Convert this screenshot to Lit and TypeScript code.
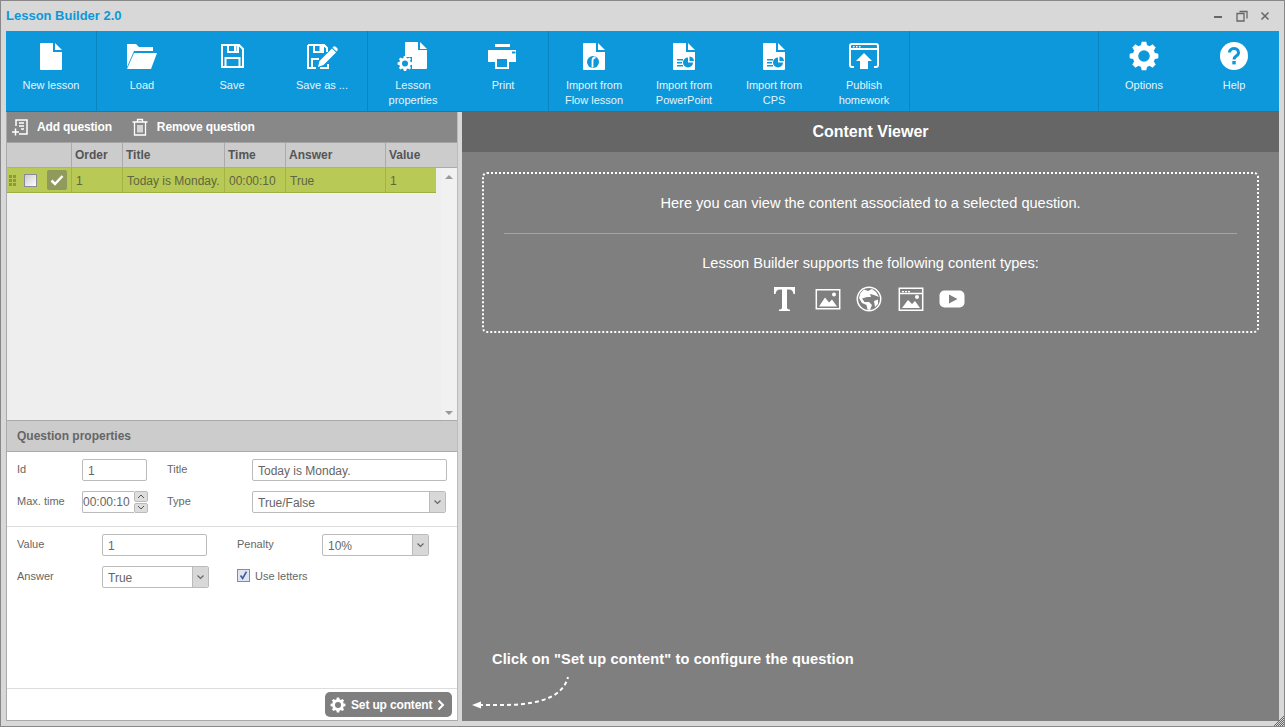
import { LitElement, html, css, svg } from 'lit'
import { customElement } from 'lit/decorators.js'

// gear outline with a round hole, teeth computed around the centre
const gearPath = (cx: number, cy: number, r: number, teeth = 8) => {
  const pts: string[] = []
  const step = (Math.PI * 2) / teeth
  const inner = r * 0.78
  for (let i = 0; i < teeth; i++) {
    const a = i * step - Math.PI / 2
    const list: [number, number][] = [
      [inner, a - step * 0.34],
      [r, a - step * 0.2],
      [r, a + step * 0.2],
      [inner, a + step * 0.34]
    ]
    for (const [rr, aa] of list) {
      pts.push(`${(cx + rr * Math.cos(aa)).toFixed(2)} ${(cy + rr * Math.sin(aa)).toFixed(2)}`)
    }
  }
  const h = r * 0.4
  return `M${pts.join('L')}Z M${cx - h} ${cy}a${h} ${h} 0 1 0 ${h * 2} 0a${h} ${h} 0 1 0 ${-h * 2} 0Z`
}

const sheet = svg`<path d="M5 4a1 1 0 0 1 1-1H18V12H27V29a1 1 0 0 1-1 1H6a1 1 0 0 1-1-1Z"/><path d="M20 3L27 10H20Z"/>`
const pie = svg`
  <path d="M9 19h6v1.500H9ZM9 22h5v1.500H9ZM9 25h6v1.500H9Z" fill="#0c98da"/>
  <path d="M20 17.500V22.500H25A5 5 0 1 1 20 17.500Z" fill="#0c98da"/>
  <path d="M21.500 16.500a5 5 0 0 1 4.500 4.500H21.500Z" fill="#0c98da"/>`

const icons: Record<string, unknown> = {
  file: sheet,
  folder: svg`<path d="M1 4H10L13 7H27V11H8L1 27Z"/><path d="M8 13H31L25 29H1Z"/>`,
  save: svg`<path d="M6 5H23L27 9V27H6Z M12 5V12H22V5 M9.500 27V18H23.500V27" fill="none" stroke="#fff" stroke-width="2"/><path d="M18 6h2.500v5H18Z"/>`,
  saveas: svg`<path d="M2 5H18L21 8V12 M10 28H2V5 M8 5V12H17V5 M6 28V19H13 M22 24V28H14" fill="none" stroke="#fff" stroke-width="2"/><path d="M13.500 6h2.500v5H13.500Z"/><path d="M12 27L13.500 21L26 8.500L30 12.500L17.500 25Z"/><path d="M27 7a2 2 0 0 1 3 0l1 1a2 2 0 0 1 0 3l-.500.500L26.500 7.500Z"/>`,
  props: svg`<path d="M8 3a1 1 0 0 1 1-1H21V10H30V28a1 1 0 0 1-1 1H15V17H8Z"/><path d="M23 2L30 9H23Z"/><path d="${gearPath(8, 23.500, 7.500)}" fill-rule="evenodd"/>`,
  print: svg`<path d="M8 4H23V7H8Z"/><path d="M1 10H29V22H1Z"/><path d="M8 17H22V29H8Z"/><path d="M10 19H20V27H10ZM25 11.500h3.500v2H25Z" fill="#0c98da"/>`,
  flow: svg`${sheet}<circle cx="15" cy="22" r="6" fill="#0c98da"/><path d="M14.500 27.500V20.500a3 3 0 0 1 3-3" fill="none" stroke="#fff" stroke-width="1.800"/>`,
  ppt: svg`${sheet}${pie}`,
  publish: svg`<path d="M6 27H4a2 2 0 0 1-2-2V6a2 2 0 0 1 2-2H28a2 2 0 0 1 2 2V25a2 2 0 0 1-2 2H26 M2 9H30" fill="none" stroke="#fff" stroke-width="2"/><path d="M5 6h1.500v1.500H5ZM8 6h1.500v1.500H8ZM11 6h1.500v1.500H11Z"/><path d="M16 13L24 21H20V29H12V21H8Z"/>`,
  gear: svg`<path d="${gearPath(16, 16, 14.500)}" fill-rule="evenodd"/>`,
  help: svg`<circle cx="16" cy="16" r="14"/><path d="M11.500 12.500a4.500 4 0 1 1 7 3.300c-1.600 1.100-2.500 1.800-2.500 3.700" fill="none" stroke="#0c98da" stroke-width="3"/><rect x="14.300" y="21" width="3.400" height="3.400" fill="#0c98da"/>`
}

interface Tool { label: string[]; icon: string }

const groups: { tools: Tool[]; width: number }[] = [
  { width: 91, tools: [{ label: ['New lesson'], icon: 'file' }] },
  { width: 271, tools: [
    { label: ['Load'], icon: 'folder' },
    { label: ['Save'], icon: 'save' },
    { label: ['Save as ...'], icon: 'saveas' }
  ] },
  { width: 181, tools: [
    { label: ['Lesson', 'properties'], icon: 'props' },
    { label: ['Print'], icon: 'print' }
  ] },
  { width: 361, tools: [
    { label: ['Import from', 'Flow lesson'], icon: 'flow' },
    { label: ['Import from', 'PowerPoint'], icon: 'ppt' },
    { label: ['Import from', 'CPS'], icon: 'ppt' },
    { label: ['Publish', 'homework'], icon: 'publish' }
  ] }
]

const chevron = html`<svg width="9" height="6" viewBox="0 0 9 6"><path d="M1.500 1.500l3 3 3-3" fill="none" stroke="#666" stroke-width="1.200"/></svg>`

// dithered corner of the window
const gripDots: [number, number][] = []
for (let y = 0; y < 10; y++) {
  for (let x = 0; x < 10; x++) {
    if (x + y >= 9 && (x + y) % 2 === 1) gripDots.push([x, y])
  }
}

@customElement('app-root')
export class AppRoot extends LitElement {
  static styles = css`
    * { box-sizing: border-box; }

    :host {
      display: block;
      width: 1285px;
      height: 727px;
      font-family: "Liberation Sans", Arial, sans-serif;
      overflow: hidden;
    }

    .window {
      position: relative;
      width: 100%;
      height: 100%;
      display: flex;
      flex-direction: column;
      background: #d8d8d8;
      border: 1px solid #888;
      padding: 0 5px 5px;
    }

    .titlebar {
      height: 30px;
      flex: none;
      display: flex;
      align-items: center;
      justify-content: space-between;
    }
    .app-title { color: #0c98da; font-size: 13px; font-weight: bold; margin-top: -1px; }
    .win-buttons { display: flex; align-items: center; gap: 11.5px; margin-right: 8px; margin-top: -1px; }
    .win-buttons svg { display: block; }

    .toolbar {
      height: 81px;
      flex: none;
      display: flex;
      background: #0c98da;
      border-bottom: 1px solid #0a7fb8;
    }
    .group { display: flex; border-right: 1px solid #0b85c0; }
    .group.end { margin-left: auto; border-right: none; border-left: 1px solid #0b85c0; width: 181px; }
    .tool {
      flex: 1;
      display: flex;
      flex-direction: column;
      align-items: center;
      padding-top: 9px;
      color: #e6f4fb;
      font-size: 11px;
      line-height: 15px;
      text-align: center;
    }
    .tool svg { display: block; fill: #fff; margin-bottom: 6px; }

    .main { flex: 1; display: flex; min-height: 0; }

    .left {
      width: 452px;
      flex: none;
      display: flex;
      flex-direction: column;
      background: #fff;
      border-left: 1px solid #aaa;
      border-right: 1px solid #bbb;
      border-bottom: 1px solid #aaa;
    }
    .splitter { width: 4px; flex: none; }

    .actions {
      height: 31px;
      flex: none;
      display: flex;
      align-items: center;
      background: #888;
      border-bottom: 1px solid #a5a5a5;
      color: #fff;
      font-size: 12px;
      font-weight: bold;
      letter-spacing: -0.15px;
      padding-left: 4px;
    }
    .action { display: flex; align-items: center; gap: 8px; margin-right: 19px; }
    .action svg { display: block; }

    .grid {
      display: grid;
      grid-template-columns: 64px 51px 102px 61px 100px 1fr;
    }
    .thead {
      height: 25px;
      flex: none;
      background: #ccc;
      border-bottom: 1px solid #aaa;
      color: #555;
      font-size: 12px;
      font-weight: bold;
      line-height: 24px;
    }
    .thead > div { padding-left: 3px; border-left: 1px solid #aaa; }
    .thead > div:first-child { border-left: none; }

    .tbody { height: 252px; flex: none; display: flex; background: #eee; }
    .rows { flex: 1; padding-right: 5px; }
    .row {
      height: 25px;
      background: #b9c955;
      border-bottom: 1px solid #9daf3e;
      color: #5f6640;
      font-size: 12px;
      line-height: 26px;
    }
    .row > div { padding-left: 4px; border-left: 1px solid #a3b345; white-space: nowrap; overflow: hidden; }
    .row > div.handle { display: flex; align-items: center; border-left: none; padding-left: 2px; }
    .dots { display: grid; grid-template-columns: 3px 3px; gap: 1px; margin-right: 8px; }
    .dots i { width: 3px; height: 3px; background: #8b9a35; }
    .rowcheck {
      width: 13px;
      height: 13px;
      border: 1px solid #8a8a9a;
      background: linear-gradient(135deg, #ccc, #fff);
      margin-right: 10px;
    }
    .okbox {
      width: 20px;
      height: 20px;
      border-radius: 2px;
      background: #8f9a5c;
      display: flex;
      align-items: center;
      justify-content: center;
    }
    .scroll {
      width: 16px;
      flex: none;
      background: #f1f1f1;
      display: flex;
      flex-direction: column;
      justify-content: space-between;
      align-items: center;
      padding: 7px 0 5px;
    }
    .tri-up { width: 0; height: 0; border: 4px solid transparent; border-top: none; border-bottom: 4px solid #999; }
    .tri-down { width: 0; height: 0; border: 4px solid transparent; border-bottom: none; border-top: 4px solid #999; }

    .props-head {
      height: 32px;
      flex: none;
      background: #ccc;
      border-top: 1px solid #aaa;
      border-bottom: 1px solid #aaa;
      color: #666;
      font-size: 12px;
      font-weight: bold;
      line-height: 30px;
      padding-left: 10px;
    }
    .form {
      flex: none;
      display: grid;
      row-gap: 10px;
      align-items: center;
      color: #666;
      font-size: 11px;
      padding: 7px 10px 13px;
    }
    .form.one { grid-template-columns: 65px 85px 85px 195px; border-bottom: 1px solid #ddd; }
    .form.two { grid-template-columns: 85px 135px 85px 107px; }
    .form label { margin-top: -2px; }
    .field {
      height: 22px;
      border: 1px solid #bbb;
      border-radius: 2px;
      background: #fff;
      color: #666;
      font: 12px "Liberation Sans", Arial, sans-serif;
      padding: 1px 5px 0;
      width: 100%;
      outline: none;
      display: block;
    }
    .w65 { width: 65px; }
    .w105 { width: 105px; }
    .w107 { width: 107px; }
    .w194 { width: 194px; }
    .select {
      height: 22px;
      border: 1px solid #bbb;
      border-radius: 2px;
      display: flex;
      align-items: center;
      font-size: 12px;
      justify-content: space-between;
      padding-left: 5px;
      overflow: hidden;
    }
    .select .label { padding-top: 1px; }
    .select .drop {
      width: 16px;
      align-self: stretch;
      background: #d8d8d8;
      border-left: 1px solid #bbb;
      display: flex;
      align-items: center;
      justify-content: center;
    }
    .spinner {
      width: 66px;
      height: 22px;
      display: flex;
      font-size: 12px;
    }
    .spinner .val {
      width: 52px;
      border: 1px solid #bbb;
      border-right: none;
      border-radius: 2px 0 0 2px;
      line-height: 21px;
      overflow: hidden;
    }
    .spinner .steps { flex: 1; display: flex; flex-direction: column; gap: 1px; }
    .spinner .steps span {
      flex: 1;
      background: #ddd;
      border: 1px solid #bbb;
      border-radius: 2px;
      display: flex;
      align-items: center;
      justify-content: center;
    }
    .uselet { grid-column: span 2; display: flex; align-items: center; gap: 5px; margin-top: -3px; white-space: nowrap; }
    .tick {
      width: 13px;
      height: 13px;
      border: 1px solid #8a8a9a;
      background: #dfe6f2;
      display: block;
    }

    .left-foot {
      margin-top: auto;
      height: 32px;
      flex: none;
      border-top: 1px solid #ddd;
      display: flex;
      justify-content: flex-end;
      align-items: center;
      padding-right: 5px;
    }
    .setup {
      width: 127px;
      height: 25px;
      background: #7f7f7f;
      border-radius: 5px;
      color: #fff;
      font-size: 12px;
      font-weight: bold;
      letter-spacing: -0.15px;
      display: flex;
      align-items: center;
      padding-left: 5px;
      gap: 5px;
    }
    .setup svg { display: block; flex: none; }

    .viewer {
      flex: 1;
      display: flex;
      flex-direction: column;
      background: #7f7f7f;
      position: relative;
      min-width: 0;
    }
    .viewer-head {
      height: 40px;
      flex: none;
      background: #666;
      color: #fff;
      font-size: 16px;
      font-weight: bold;
      display: flex;
      align-items: center;
      justify-content: center;
    }
    .viewer-body { flex: 1; padding: 20px 20px 0; display: flex; flex-direction: column; }
    .info {
      height: 161px;
      flex: none;
      border: 2px dotted #fff;
      border-radius: 5px;
      color: #fff;
      font-size: 14.6px;
      text-align: center;
      padding: 20px 20px 0;
    }
    .info .line { line-height: 18px; }
    .info hr { border: none; border-top: 1px solid #a5a5a5; margin: 21px 0 20px; }
    .types { display: flex; justify-content: center; gap: 15.5px; margin: 14px 0 0 -3px; }
    .types svg { display: block; }
    .hint {
      margin-top: auto;
      margin-bottom: 53px;
      padding-left: 10px;
      color: #fff;
      font-size: 14.6px;
      font-weight: bold;
      letter-spacing: 0.13px;
      line-height: 18px;
    }
    .arrow { position: absolute; left: 8px; bottom: 10px; display: block; }
    .grip { position: absolute; right: 0; bottom: 0; display: block; }
  `

  renderTool (t: Tool) {
    return html`<div class="tool">
      <svg width="32" height="32" viewBox="0 0 32 32">${icons[t.icon]}</svg>
      ${t.label.map(l => html`<div>${l}</div>`)}
    </div>`
  }

  renderToolbar () {
    return html`<div class="toolbar">
      ${groups.map(g => html`<div class="group" style="width:${g.width}px">${g.tools.map(t => this.renderTool(t))}</div>`)}
      <div class="group end">
        ${this.renderTool({ label: ['Options'], icon: 'gear' })}
        ${this.renderTool({ label: ['Help'], icon: 'help' })}
      </div>
    </div>`
  }

  renderTable () {
    return html`
      <div class="actions">
        <div class="action">
          <svg width="18" height="18" viewBox="0 0 18 18" fill="none" stroke="#fff" stroke-width="1.500">
            <path d="M5 8V2H16V16H8M8 5h5M8 8h5M10 11h3M1 14h7M4.500 10.500v7"/>
          </svg>
          Add question
        </div>
        <div class="action">
          <svg width="18" height="18" viewBox="0 0 18 18" fill="none" stroke="#fff" stroke-width="1.300">
            <path d="M1.500 4H16.500M6.500 4V1.500H11.500V4M3.500 4V17H14.500V4M7 7V14.500M9 7V14.500M11 7V14.500"/>
          </svg>
          Remove question
        </div>
      </div>
      <div class="thead grid">
        <div></div><div>Order</div><div>Title</div><div>Time</div><div>Answer</div><div>Value</div>
      </div>
      <div class="tbody">
        <div class="rows">
          <div class="row grid">
            <div class="handle">
              <div class="dots">${[0, 1, 2, 3, 4, 5].map(() => html`<i></i>`)}</div>
              <div class="rowcheck"></div>
              <div class="okbox">
                <svg width="14" height="12" viewBox="0 0 14 12"><path d="M1.500 6.500L5 10L12.500 2" fill="none" stroke="#fff" stroke-width="2.500"/></svg>
              </div>
            </div>
            <div>1</div><div>Today is Monday.</div><div>00:00:10</div><div>True</div><div>1</div>
          </div>
        </div>
        <div class="scroll"><div class="tri-up"></div><div class="tri-down"></div></div>
      </div>`
  }

  renderForm () {
    return html`
      <div class="props-head">Question properties</div>
      <div class="form one">
        <label>Id</label>
        <input class="field w65" value="1">
        <label>Title</label>
        <input class="field" value="Today is Monday.">
        <label>Max. time</label>
        <div class="spinner">
          <div class="val">00:00:10</div>
          <div class="steps">
            <span><svg width="8" height="5" viewBox="0 0 8 5"><path d="M1 4l3-3 3 3" fill="none" stroke="#555"/></svg></span>
            <span><svg width="8" height="5" viewBox="0 0 8 5"><path d="M1 1l3 3 3-3" fill="none" stroke="#555"/></svg></span>
          </div>
        </div>
        <label>Type</label>
        <div class="select w194"><span class="label">True/False</span><span class="drop">${chevron}</span></div>
      </div>
      <div class="form two">
        <label>Value</label>
        <input class="field w105" value="1">
        <label>Penalty</label>
        <div class="select"><span class="label">10%</span><span class="drop">${chevron}</span></div>
        <label>Answer</label>
        <div class="select w107"><span class="label">True</span><span class="drop">${chevron}</span></div>
        <div class="uselet">
          <svg class="tick" viewBox="0 0 13 13"><path d="M3 6.500L5.500 10L10 2" fill="none" stroke="#3b5ea8" stroke-width="2"/></svg>
          Use letters
        </div>
      </div>
      <div class="left-foot">
        <div class="setup">
          <svg width="16" height="16" viewBox="0 0 16 16"><path fill="#fff" fill-rule="evenodd" d="${gearPath(8, 8, 7.500)}"/></svg>
          Set up content
          <svg width="8" height="12" viewBox="0 0 8 12"><path d="M1.500 1.500L6 6L1.500 10.500" fill="none" stroke="#fff" stroke-width="2"/></svg>
        </div>
      </div>`
  }

  renderViewer () {
    return html`
      <div class="viewer-head">Content Viewer</div>
      <div class="viewer-body">
        <div class="info">
          <div class="line">Here you can view the content associated to a selected question.</div>
          <hr>
          <div class="line">Lesson Builder supports the following content types:</div>
          <div class="types">
            <svg width="26" height="26" viewBox="0 0 26 26"><path fill="#fff" d="M1 1H22V8H20.500C20 5 19 3.500 16 3.500H14V21.500C14 23 15 23.500 17 23.500V25H6V23.500C8 23.500 9 23 9 21.500V3.500H7C4 3.500 3 5 2.500 8H1Z"/></svg>
            <svg width="26" height="26" viewBox="0 0 26 26"><path fill="none" stroke="#fff" stroke-width="1.500" d="M1.300 3.800H24.700V22.800H1.300Z"/><path fill="#fff" d="M4 20.500L10 11.500L14 16.500L17 13.500L22 20.500Z"/><circle cx="19" cy="8.500" r="2" fill="#fff"/></svg>
            <svg width="26" height="26" viewBox="0 0 26 26"><circle cx="13" cy="13" r="11.700" fill="none" stroke="#fff" stroke-width="1.500"/><path fill="#fff" d="M8 3.500L12 5L16 3L20 6L23 11L18 9L14 8L15 11L11 11L6 12.500L8.500 16L13 16L16 19L14 24L11.500 23.500L10.500 19L6 17L3 12L4.500 7ZM18 15L22 13.500L22 18L19 21Z"/></svg>
            <svg width="26" height="26" viewBox="0 0 26 26"><path fill="none" stroke="#fff" stroke-width="1.500" d="M1.300 2.300H24.700V24.300H1.300ZM1.300 7.500H24.700"/><path fill="#fff" d="M4 5h2v1.200H4ZM7 5h2v1.200H7ZM10 5h2v1.200H10ZM4 22L10 14L14 18L17 15L22 22Z"/><circle cx="19" cy="11" r="2" fill="#fff"/></svg>
            <svg width="26" height="26" viewBox="0 0 26 26"><rect x="0.500" y="4.500" width="25" height="17" rx="5" fill="#fff"/><path d="M10 8.500L18.500 13L10 17.500Z" fill="#7f7f7f"/></svg>
          </div>
        </div>
        <div class="hint">Click on "Set up content" to configure the question</div>
      </div>
      <svg class="arrow" width="100" height="36" viewBox="0 0 100 36">
        <path d="M9 30H30C60 30 92 26 98 2" fill="none" stroke="#fff" stroke-width="2" stroke-dasharray="4 3"/>
        <path d="M2 30L11 26.500V33.500Z" fill="#fff"/>
      </svg>`
  }

  render () {
    return html`
      <div class="window">
        <div class="titlebar">
          <div class="app-title">Lesson Builder 2.0</div>
          <div class="win-buttons">
            <svg width="12" height="12" viewBox="0 0 12 12"><path d="M2 6h8v2H2Z" fill="#666"/></svg>
            <svg width="12" height="12" viewBox="0 0 12 12" fill="none" stroke="#666" stroke-width="1.300"><path d="M1 3.500H8V11H1ZM3.500 1.500H11V8.500"/></svg>
            <svg width="12" height="12" viewBox="0 0 12 12" fill="none" stroke="#666" stroke-width="1.500"><path d="M2.500 2.500L9.500 9.500M9.500 2.500L2.500 9.500"/></svg>
          </div>
        </div>
        ${this.renderToolbar()}
        <div class="main">
          <div class="left">
            ${this.renderTable()}
            ${this.renderForm()}
          </div>
          <div class="splitter"></div>
          <div class="viewer">${this.renderViewer()}</div>
        </div>
        <svg class="grip" width="10" height="10" viewBox="0 0 10 10">
          ${gripDots.map(([x, y]) => svg`<rect x="${x}" y="${y}" width="1" height="1" fill="#666"/>`)}
        </svg>
      </div>`
  }
}
